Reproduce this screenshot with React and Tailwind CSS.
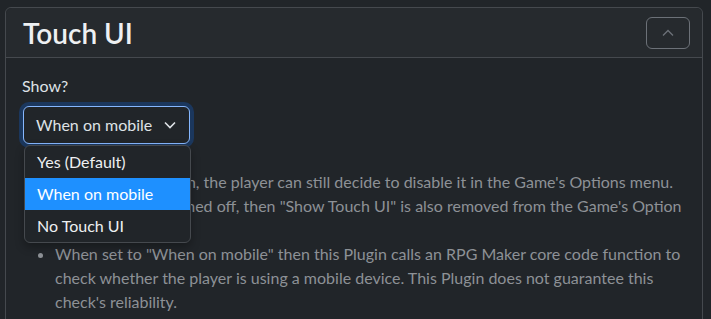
import React from "react";

export default function App() {
  return (
    <div
      className="w-[711px] h-[319px] overflow-hidden bg-[#212529] pt-[7px] pl-[5px] pr-[8px]"
      style={{ fontFamily: 'Lato, "Noto Sans", sans-serif' }}
    >
      <div className="rounded-[6px] border border-[#45494e] h-[330px]">
        <div className="flex items-center justify-between h-[50px] pl-[17px] pr-[12px] bg-[#262a2e] border-b border-[#45494e] rounded-t-[6px]">
          <h3 className="text-[28px] leading-none font-semibold text-[#eef0f2]">Touch UI</h3>
          <button className="w-[44px] h-[32px] rounded-[6px] border border-[#6c7178] flex items-center justify-center">
            <svg width="14" height="10" viewBox="0 0 14 10" fill="none">
              <path d="M2 7.5 L7 2.5 L12 7.5" stroke="#6c7178" strokeWidth="1.3" />
            </svg>
          </button>
        </div>
        <div className="px-4 pt-4 text-[16px] leading-[24px]">
          <div className="text-[#dee2e6] mb-2">Show?</div>
          <div className="relative">
            <div className="w-[167px] h-[38px] ml-px rounded-[6px] border border-[#86b7fe] shadow-[0_0_0_4px_rgba(13,110,253,0.25)] bg-[#212529] flex items-center justify-between pl-[12px] pr-[12px] text-[#dee2e6]">
              <span>When on mobile</span>
              <svg width="14" height="10" viewBox="0 0 14 10" fill="none">
                <path d="M2 2.5 L7 7.5 L12 2.5" stroke="#dee2e6" strokeWidth="1.6" />
              </svg>
            </div>
            <div className="absolute z-10 left-[2px] top-[39px] w-[167px] rounded-[6px] border border-[#45494e] bg-[#212529] overflow-hidden text-[#eef0f2] shadow-[0_4px_10px_rgba(0,0,0,0.3)]">
              <div className="h-[32px] flex items-center pl-[12px]">Yes (Default)</div>
              <div className="h-[32px] flex items-center pl-[12px] bg-[#1e90ff] text-white">When on mobile</div>
              <div className="h-[32px] flex items-center pl-[12px]">No Touch UI</div>
            </div>
            <ul className="list-disc pl-[33px] mt-[26px] text-[#8d9196] marker:text-[#8d9196]">
              <li>
                If Touch UI is shown, the player can still decide to disable it in the Game's Options menu.
                If Touch UI is switched off, then "Show Touch UI" is also removed from the Game's Option
                <br />
                menu.
              </li>
              <li>
                When set to "When on mobile" then this Plugin calls an RPG Maker core code function to
                check whether the player is using a mobile device. This Plugin does not guarantee this
                check's reliability.
              </li>
            </ul>
          </div>
        </div>
      </div>
    </div>
  );
}
